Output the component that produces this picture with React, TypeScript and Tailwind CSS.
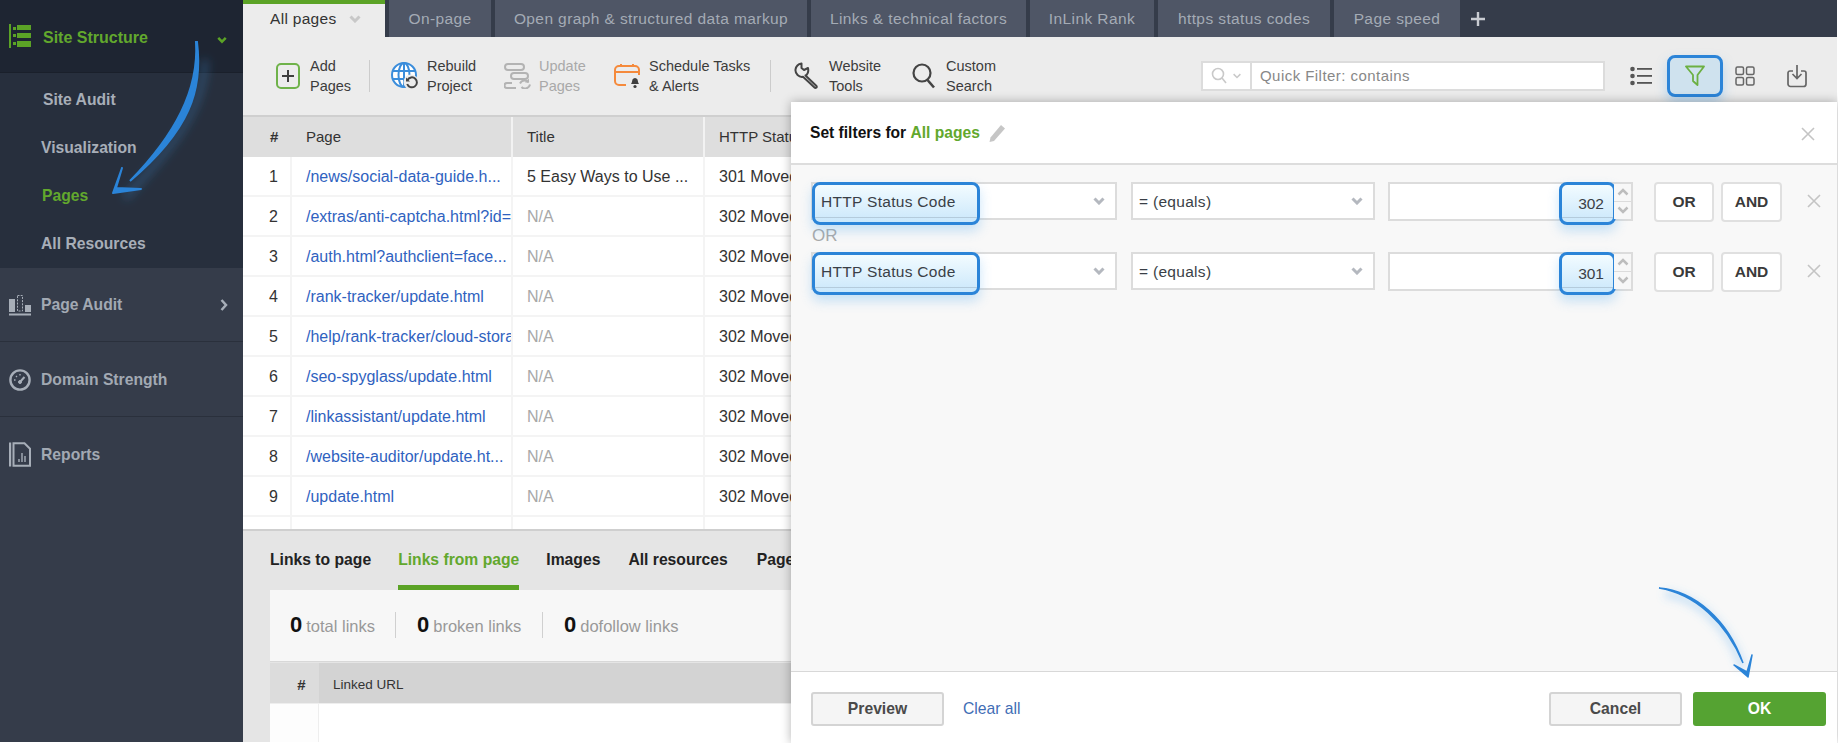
import React from "react";

const FONT = "font-['Liberation_Sans',Arial,sans-serif]";

const Chevron = ({ className = "", color = "#b4b8bf", w = 3 }: { className?: string; color?: string; w?: number }) => (
  <svg width="12" height="8" viewBox="0 0 12 8" className={className}>
    <path d="M1.5 1.5 6 6l4.5-4.5" fill="none" stroke={color} strokeWidth={w} />
  </svg>
);

const XIcon = ({ size = 14 }: { size?: number }) => (
  <svg width={size} height={size} viewBox="0 0 14 14">
    <path d="M1 1l12 12M13 1 1 13" stroke="#c4c4c4" strokeWidth="1.6" fill="none" />
  </svg>
);

const SiteStructureIcon = () => (
  <svg width="22" height="24" viewBox="0 0 22 24" fill="#5ba326">
    <rect x="0" y="0" width="2" height="24" />
    <rect x="4" y="3" width="3" height="3" />
    <rect x="4" y="10" width="3" height="3" />
    <rect x="4" y="18" width="3" height="3" />
    <rect x="8" y="1" width="14" height="5" />
    <rect x="8" y="9" width="14" height="5" />
    <rect x="8" y="17" width="14" height="6" />
  </svg>
);
const PageAuditIcon = () => (
  <svg width="22" height="22" viewBox="0 0 22 22" fill="#a7aeb8">
    <rect x="0" y="5" width="6" height="13" />
    <path d="M8.5 1.5h5v15.5h-5z" fill="none" stroke="#a7aeb8" strokeDasharray="2 1.2" />
    <rect x="16" y="11" width="6" height="7" />
    <rect x="0" y="19.5" width="22" height="2" />
  </svg>
);
const GaugeIcon = () => (
  <svg width="22" height="22" viewBox="0 0 22 22" fill="none" stroke="#a7aeb8">
    <circle cx="11" cy="11" r="9.6" strokeWidth="2.4" />
    <path d="M11 13l4.5-5" strokeWidth="2" />
    <path d="M5 11h1.5M11 5v1.5M7 7l1 1" strokeWidth="1.4" />
    <circle cx="11" cy="13" r="1.5" fill="#a7aeb8" />
  </svg>
);
const ReportsIcon = () => (
  <svg width="22" height="25" viewBox="0 0 22 25" fill="none" stroke="#a7aeb8">
    <path d="M1 0.5v24" strokeWidth="2.4" />
    <path d="M4.5 1.2h11l5.5 5.5v17H4.5z" strokeWidth="2" />
    <path d="M10 20v-3M13 20v-9M16 20v-6" strokeWidth="1.4" />
  </svg>
);

const AddIcon = () => (
  <svg width="24" height="26" viewBox="0 0 24 26" fill="none">
    <rect x="1" y="1" width="22" height="24" rx="4" stroke="#6fb24a" strokeWidth="2" />
    <path d="M12 7v12M6 13h12" stroke="#3f3f3f" strokeWidth="2" />
  </svg>
);
const GlobeIcon = () => (
  <svg width="28" height="28" viewBox="0 0 28 28" fill="none">
    <circle cx="13" cy="13" r="12" fill="#ffffff" stroke="#3b8ddb" strokeWidth="2" />
    <ellipse cx="13" cy="13" rx="5.5" ry="12" stroke="#3b8ddb" strokeWidth="2" />
    <path d="M2 9h22M2 17h22M13 1v24" stroke="#3b8ddb" strokeWidth="2" />
    <circle cx="20" cy="20" r="7.5" fill="#ececec" />
    <path d="M16.5 18a5 5 0 1 1-.3 4" stroke="#444" strokeWidth="2" />
    <path d="M15 15.5v4h4z" fill="#444" />
  </svg>
);
const UpdateIcon = () => (
  <svg width="28" height="26" viewBox="0 0 28 26" fill="none" stroke="#b3b3b3" strokeWidth="2">
    <rect x="1" y="1" width="19" height="6" rx="3" />
    <rect x="7" y="10" width="17" height="6" rx="3" />
    <path d="M8 20H3a2.5 2.5 0 0 0 0 5h9" />
    <path d="M16 20.5a5 5 0 0 1 8.5-1M26 21.5a5 5 0 0 1-8.5 2.5" />
    <path d="M25 15.5v4h-4z" fill="#b3b3b3" stroke="none" />
  </svg>
);
const ScheduleIcon = () => (
  <svg width="28" height="26" viewBox="0 0 28 26" fill="none">
    <path d="M12 22H5a4 4 0 0 1-4-4V7a4 4 0 0 1 4-4h16a4 4 0 0 1 4 4v5" stroke="#f58a3c" strokeWidth="2" />
    <path d="M1 9h24M7 1v3M19 1v3" stroke="#f58a3c" strokeWidth="2" />
    <path d="M17 21c1-1 1-3 1.5-4.5a2.8 2.8 0 0 1 5 0C24 18 24 20 25 21z" fill="#3f3f3f" />
    <circle cx="21" cy="23.5" r="1.6" fill="#3f3f3f" />
  </svg>
);
const WrenchIcon = () => (
  <svg width="25" height="27" viewBox="0 0 25 27" fill="none" stroke="#444" strokeWidth="2" strokeLinejoin="round">
    <path d="M7.5 1.5 L7.5 6 L10 8 L14 6 C15 10 13 13 11.5 13.5 L22.5 24 C23.5 25.5 21.5 26.5 20.5 25.5 L9 14.8 C5 15.5 1 12 1.5 7.5 C2 4.5 4.5 2 7.5 1.5 Z" />
  </svg>
);
const SearchIcon = () => (
  <svg width="24" height="26" viewBox="0 0 24 26" fill="none" stroke="#444">
    <circle cx="10" cy="10" r="8.5" strokeWidth="2.2" />
    <path d="M15.5 17l6.5 7.5" strokeWidth="2.6" />
  </svg>
);
const ListIcon = () => (
  <svg width="22" height="20" viewBox="0 0 22 20" fill="#555">
    <circle cx="2.5" cy="3" r="2.3" />
    <circle cx="2.5" cy="10" r="2.3" />
    <circle cx="2.5" cy="17" r="2.3" />
    <rect x="7" y="2" width="15" height="1.8" />
    <rect x="7" y="9" width="15" height="1.8" />
    <rect x="7" y="16" width="15" height="1.8" />
  </svg>
);
const FunnelIcon = () => (
  <svg width="20" height="21" viewBox="0 0 20 21" fill="none" stroke="#6cb043" strokeWidth="1.8">
    <path d="M1 1.5h18L12.5 10v10l-4.5-4v-6z" strokeLinejoin="round" />
  </svg>
);
const GridIcon = () => (
  <svg width="20" height="20" viewBox="0 0 20 20" fill="none" stroke="#666" strokeWidth="1.5">
    <rect x="1" y="1" width="7.5" height="7.5" rx="1.5" />
    <rect x="11.5" y="1" width="7.5" height="7.5" rx="1.5" />
    <rect x="1" y="11.5" width="7.5" height="7.5" rx="1.5" />
    <rect x="11.5" y="11.5" width="7.5" height="7.5" rx="1.5" />
  </svg>
);
const ExportIcon = () => (
  <svg width="20" height="24" viewBox="0 0 20 24" fill="none" stroke="#666" strokeWidth="1.7">
    <path d="M6 7H3a2 2 0 0 0-2 2v11a2.5 2.5 0 0 0 2.5 2.5h13A2.5 2.5 0 0 0 19 20V9a2 2 0 0 0-2-2h-3" />
    <path d="M10 1v13M5.5 10l4.5 4.5 4.500-4.5" />
  </svg>
);
const Pencil = () => (
  <svg width="17" height="18" viewBox="0 0 17 18" fill="#c6c6c6">
    <path d="M12 1l4 3.5L5 17l-4.5 1L1.5 13.5z" />
  </svg>
);

const tabs: [string, string][] = [
  ["On-page", "w-[102px]"],
  ["Open graph & structured data markup", "w-[312px]"],
  ["Links & technical factors", "w-[215px]"],
  ["InLink Rank", "w-[124px]"],
  ["https status codes", "w-[172px]"],
  ["Page speed", "w-[126px]"],
];

const rows: [string, string, string][] = [
  ["1", "/news/social-data-guide.h...", "5 Easy Ways to Use ..."],
  ["2", "/extras/anti-captcha.html?id=", "N/A"],
  ["3", "/auth.html?authclient=face...", "N/A"],
  ["4", "/rank-tracker/update.html", "N/A"],
  ["5", "/help/rank-tracker/cloud-storage", "N/A"],
  ["6", "/seo-spyglass/update.html", "N/A"],
  ["7", "/linkassistant/update.html", "N/A"],
  ["8", "/website-auditor/update.ht...", "N/A"],
  ["9", "/update.html", "N/A"],
];

const ToolItem = ({ icon, a, b, cls, off, w }: { icon: React.ReactNode; a: string; b: string; cls: string; off?: boolean; w: string }) => (
  <div className={"flex items-center shrink-0 " + cls}>
    <div className={"flex items-center shrink-0 " + w}>{icon}</div>
    <div className={"text-[14.5px] leading-[20px] " + (off ? "text-[#a9a9a9]" : "text-[#3c3c3c]")}>
      <div>{a}</div>
      <div>{b}</div>
    </div>
  </div>
);

const Highlight = ({ className, children }: { className: string; children?: React.ReactNode }) => (
  <div
    className={
      "absolute border-[3px] border-[#2b84d8] rounded-[8px] bg-gradient-to-b from-[#f2fbff] to-[#cbe8fb] shadow-[0_6px_12px_rgba(80,170,240,0.3)] " +
      className
    }
  >
    {children}
    <div className="absolute left-0 right-0 bottom-[4px] h-[1px] bg-[#b4cbdc]" />
  </div>
);

const FilterRow = ({ value }: { value: string }) => (
  <div className="flex items-start h-[39px]">
    <div className="relative w-[306px] h-[38px] bg-white border-2 border-[#dcdcdc] shrink-0">
      <Highlight className="left-[-1px] top-[-2px] w-[168px] h-[43px] flex items-center pl-[6px] pb-[4px] text-[15.5px] text-[#3a3f47] tracking-[0.3px]">
        HTTP Status Code
      </Highlight>
      <Chevron className="absolute right-[10px] top-[13px]" />
    </div>
    <div className="relative ml-[14px] w-[244px] h-[38px] bg-white border-2 border-[#dcdcdc] shrink-0 flex items-center pl-[6px] pt-[1px] text-[15.5px] text-[#3a3f47] tracking-[0.3px]">
      = (equals)
      <Chevron className="absolute right-[10px] top-[13px]" />
    </div>
    <div className="relative ml-[13px] w-[245px] h-[39px] bg-white border-2 border-[#dcdcdc] shrink-0">
      <Highlight className="left-[169px] top-[-2px] w-[57px] h-[43px] flex items-center justify-end pr-[9px] pt-[1px] text-[15.5px] text-[#3a3f47]">
        {value}
      </Highlight>
      <div className="absolute right-0 top-0 w-[17px] h-full flex flex-col bg-[#f7f7f7]">
        <div className="h-1/2 flex items-center justify-center border-b border-[#dcdcdc]">
          <Chevron className="rotate-180" color="#bdbdbd" w={2.5} />
        </div>
        <div className="h-1/2 flex items-center justify-center">
          <Chevron color="#bdbdbd" w={2.5} />
        </div>
      </div>
    </div>
    <button className="ml-[21px] w-[60px] h-[40px] bg-white border-2 border-[#e0e0e0] rounded-[4px] text-[15.5px] font-bold text-[#3a3a3a]">
      OR
    </button>
    <button className="ml-[7px] w-[61px] h-[40px] bg-white border-2 border-[#e0e0e0] rounded-[4px] text-[15.5px] font-bold text-[#3a3a3a]">
      AND
    </button>
    <div className="ml-[25px] mt-[12px]">
      <XIcon />
    </div>
  </div>
);

const SideItem = ({ label, active, cls }: { label: string; active?: boolean; cls: string }) => (
  <div className={"h-[48px] flex items-center text-[15.7px] font-bold " + cls + (active ? " text-[#62a82d]" : " text-[#a7aeb8]")}>
    {label}
  </div>
);

const SideSection = ({ icon, label, cls, last, arrow }: { icon: React.ReactNode; label: string; cls: string; last?: boolean; arrow?: boolean }) => (
  <div className={"relative flex items-center pl-[9px] gap-[10px] text-[15.7px] font-bold text-[#a2a9b3] " + cls + (last ? "" : " border-b border-[#2a303c]")}>
    <div className="w-[22px] flex justify-center">{icon}</div>
    <span>{label}</span>
    {arrow && (
      <svg width="8" height="12" viewBox="0 0 8 12" className="absolute left-[220px] top-[31px]">
        <path d="M1.5 1l4.5 5-4.5 5" fill="none" stroke="#a7aeb8" strokeWidth="2.5" />
      </svg>
    )}
  </div>
);

export default function App() {
  return (
    <div className={"relative w-[1838px] h-[743px] overflow-hidden bg-white flex " + FONT}>
      {/* Sidebar */}
      <aside className="w-[243px] h-[742px] bg-[#353c4a] shrink-0 flex flex-col">
        <div className="relative h-[73px] bg-[#1e2532] flex items-center pl-[9px] gap-[12px] text-[16px] font-bold text-[#62a82d] border-b border-[#1a202b]">
          <SiteStructureIcon />
          <span className="pt-[4px]">Site Structure</span>
          <Chevron className="absolute left-[217px] top-[36px] w-[10px]" color="#5ba326" />
        </div>
        <div className="h-[195px] bg-[#272f3d] pt-[3px]">
          <SideItem label="Site Audit" cls="pl-[43px]" />
          <SideItem label="Visualization" cls="pl-[41px]" />
          <SideItem label="Pages" active cls="pl-[42px]" />
          <SideItem label="All Resources" cls="pl-[41px]" />
        </div>
        <SideSection icon={<PageAuditIcon />} label="Page Audit" cls="h-[74px] pt-[1px]" arrow />
        <SideSection icon={<GaugeIcon />} label="Domain Strength" cls="h-[75px] pt-[1px]" />
        <SideSection icon={<ReportsIcon />} label="Reports" cls="h-[74px] pt-[1px]" last />
      </aside>

      {/* Main */}
      <main className="w-[1594px] h-[742px] flex flex-col shrink-0">
        {/* Tab bar */}
        <div className="h-[37px] bg-[#353c4a] flex shrink-0 gap-[4px]">
          <div className="w-[142px] bg-[#ececec] border-t-4 border-[#5ba326] flex items-center pl-[27px] pb-[3px] text-[15.5px] text-[#333] tracking-[0.3px] whitespace-nowrap">
            All pages
            <Chevron className="ml-[13px]" color="#c8c8c8" />
          </div>
          {tabs.map(([t, w]) => (
            <div key={t} className={"bg-[#4f5666] flex items-center justify-center pt-[1px] text-[15.5px] text-[#a4abb5] tracking-[0.4px] whitespace-nowrap " + w}>
              {t}
            </div>
          ))}
          <svg width="14" height="14" viewBox="0 0 14 14" className="ml-[7px] mt-[12px]">
            <path d="M7 0v14M0 7h14" stroke="#c9ccd2" strokeWidth="2.4" />
          </svg>
        </div>

        {/* Toolbar */}
        <div className="h-[80px] bg-[#ececec] border-b-2 border-[#cfcfcf] flex items-center shrink-0 pb-[1px] pl-[33px]">
          <ToolItem cls="w-[93px]" w="w-[34px]" icon={<AddIcon />} a="Add" b="Pages" />
          <div className="w-[1px] h-[32px] bg-[#cccccc] mr-[21px]" />
          <ToolItem cls="w-[113px]" w="w-[36px]" icon={<GlobeIcon />} a="Rebuild" b="Project" />
          <ToolItem cls="w-[110px]" w="w-[35px]" icon={<UpdateIcon />} a="Update" b="Pages" off />
          <ToolItem cls="w-[156px]" w="w-[35px]" icon={<ScheduleIcon />} a="Schedule Tasks" b="& Alerts" />
          <div className="w-[1px] h-[32px] bg-[#cccccc] mr-[23px]" />
          <ToolItem cls="w-[118px]" w="w-[35px]" icon={<WrenchIcon />} a="Website" b="Tools" />
          <ToolItem cls="w-[289px]" w="w-[34px]" icon={<SearchIcon />} a="Custom" b="Search" />
          <div className="w-[404px] h-[30px] bg-white border-2 border-[#dcdcdc] flex items-center shrink-0">
            <div className="w-[49px] h-full border-r-2 border-[#dcdcdc] flex items-center pl-[8px] gap-[4px]">
              <svg width="16" height="17" viewBox="0 0 16 17" fill="none" stroke="#c9c9c9" strokeWidth="1.6">
                <circle cx="7" cy="7" r="5.5" />
                <path d="M11 11l4 5" />
              </svg>
              <Chevron className="scale-75" color="#c9c9c9" w={2} />
            </div>
            <span className="pl-[8px] pt-[1px] text-[15px] text-[#888] tracking-[0.45px]">Quick Filter: contains</span>
          </div>
          <div className="ml-[25px] shrink-0 flex">
            <ListIcon />
          </div>
          <div className="ml-[15px] w-[56px] h-[42px] border-[3px] border-[#2b84d8] rounded-[8px] bg-[#cfe2ee] shadow-[0_6px_12px_rgba(80,170,240,0.35)] flex items-center justify-center shrink-0">
            <FunnelIcon />
          </div>
          <div className="ml-[12px] shrink-0 flex">
            <GridIcon />
          </div>
          <div className="ml-[32px] shrink-0 flex">
            <ExportIcon />
          </div>
        </div>

        {/* Table */}
        <div className="h-[414px] bg-white border-b-2 border-[#cfcfcf] shrink-0 overflow-hidden">
          <div className="h-[40px] bg-[#dedede] flex text-[15px] text-[#333] items-center">
            <div className="w-[49px] pl-[27px] pt-[1px] font-bold">#</div>
            <div className="w-[221px] pl-[14px] pt-[1px] h-full flex items-center border-r-2 border-[#f2f2f2]">Page</div>
            <div className="w-[192px] pl-[14px] pt-[1px] h-full flex items-center border-r-2 border-[#f2f2f2]">Title</div>
            <div className="pl-[14px] w-[86px] pt-[1px] whitespace-nowrap overflow-hidden shrink-0">HTTP Status Code</div>
          </div>
          {rows.map(([n, p, t], i) => (
            <div key={n} className="h-[40px] flex items-center border-b-2 border-[#f4f4f4] text-[16px]">
              <div className="w-[49px] h-full pl-[26px] pt-[1px] flex items-center border-r-2 border-[#f4f4f4] text-[16px] text-[#333] shrink-0">{n}</div>
              <div className="w-[221px] h-full pl-[14px] pt-[1px] flex items-center border-r-2 border-[#f4f4f4] text-[#2f62c0] whitespace-nowrap overflow-hidden shrink-0">{p}</div>
              <div className={"w-[192px] h-full pl-[14px] pt-[1px] flex items-center border-r-2 border-[#f4f4f4] shrink-0 " + (t === "N/A" ? "text-[#a8a8a8]" : "text-[#333]")}>{t}</div>
              <div className="pl-[14px] pt-[1px] w-[86px] text-[#333] whitespace-nowrap overflow-hidden shrink-0">{i === 0 ? "301 Moved Permanently" : "302 Moved Temporarily"}</div>
            </div>
          ))}
          <div className="h-[14px] flex">
            <div className="w-[49px] border-r-2 border-[#f4f4f4]" />
            <div className="w-[221px] border-r-2 border-[#f4f4f4]" />
            <div className="w-[192px] border-r-2 border-[#f4f4f4]" />
          </div>
        </div>

        {/* Bottom pane */}
        <div className="flex-1 bg-[#e5e5e5] pl-[27px] flex flex-col min-h-0">
          <div className="h-[59px] flex text-[15.7px] font-bold text-[#222] shrink-0">
            <div className="pt-[17px]">Links to page</div>
            <div className="ml-[27px] pt-[17px] text-[#62a82d] border-b-[5px] border-[#5ba326]">Links from page</div>
            <div className="ml-[27px] pt-[17px]">Images</div>
            <div className="ml-[28px] pt-[17px]">All resources</div>
            <div className="ml-[29px] pt-[17px] w-[34px] overflow-hidden whitespace-nowrap">Page Source</div>
          </div>
          <div className="h-[72px] bg-[#f7f7f7] border-b border-[#d8d8d8] flex items-center shrink-0 pb-[2px] text-[16.5px] text-[#999]">
            <div className="flex items-baseline ml-[20px] w-[105px]">
              <span className="text-[22px] font-bold text-[#111] mr-[4px]">0</span>total links
            </div>
            <div className="w-[1px] h-[26px] bg-[#d0d0d0]" />
            <div className="flex items-baseline ml-[21px] w-[125px]">
              <span className="text-[22px] font-bold text-[#111] mr-[4px]">0</span>broken links
            </div>
            <div className="w-[1px] h-[26px] bg-[#d0d0d0]" />
            <div className="flex items-baseline ml-[21px]">
              <span className="text-[22px] font-bold text-[#111] mr-[4px]">0</span>dofollow links
            </div>
          </div>
          <div className="h-[40px] flex shrink-0 mt-[1px] text-[13.5px] text-[#333]">
            <div className="w-[49px] bg-[#dcdcdc] flex items-center justify-center pl-[14px] pt-[4px] text-[15px] font-bold">#</div>
            <div className="flex-1 bg-[#d3d3d3] flex items-center pl-[14px] pt-[4px]">Linked URL</div>
          </div>
          <div className="flex-1 bg-white border-t border-[#eeeeee] flex">
            <div className="w-[49px] bg-[#fdfdfd] border-r border-[#eeeeee]" />
          </div>
        </div>
      </main>

      {/* Modal overlay */}
      <div className="absolute left-[791px] top-[102px] w-[1046px] h-[641px] bg-white shadow-[0_0_10px_rgba(0,0,0,0.3)] flex flex-col">
        <div className="h-[63px] border-b-2 border-[#dddddd] flex items-center pl-[19px] pt-[1px] text-[15.6px] font-bold text-[#111] relative shrink-0">
          Set filters for&nbsp;<span className="text-[#62a82d]">All pages</span>
          <span className="ml-[9px] flex"><Pencil /></span>
          <div className="absolute right-[22px] top-[25px]">
            <XIcon />
          </div>
        </div>
        <div className="flex-1 bg-[#f8f8f8] border-b border-[#d8d8d8] pl-[20px] pt-[17px]">
          <FilterRow value="302" />
          <div className="h-[31px] flex items-center pl-[1px] pb-[1px] text-[17px] text-[#a9a9a9]">OR</div>
          <FilterRow value="301" />
        </div>
        <div className="h-[71px] flex items-start justify-between pt-[20px] pl-[20px] pr-[11px] shrink-0 text-[15.7px]">
          <div className="flex">
            <button className="w-[133px] h-[34px] bg-[#f5f5f5] border-2 border-[#d4d4d4] rounded-[3px] font-bold text-[#4a4a4a]">Preview</button>
            <span className="ml-[19px] leading-[34px] text-[#3f6db5] whitespace-nowrap">Clear all</span>
          </div>
          <div className="flex gap-[11px]">
            <button className="w-[133px] h-[34px] bg-[#f5f5f5] border-2 border-[#d4d4d4] rounded-[3px] font-bold text-[#4a4a4a]">Cancel</button>
            <button className="w-[133px] h-[34px] bg-[#55a332] rounded-[3px] font-bold text-white">OK</button>
          </div>
        </div>
      </div>

      {/* Sidebar arrow annotation */}
      <svg width="243" height="260" viewBox="0 0 243 260" className="absolute left-0 top-0 pointer-events-none">
        <defs>
          <filter id="glow" x="-40%" y="-40%" width="180%" height="180%">
            <feGaussianBlur stdDeviation="5" />
          </filter>
        </defs>
        <path d="M205 60 C 204 110, 170 150, 125 198" stroke="#3d8fd8" strokeOpacity="0.35" strokeWidth="6" fill="none" filter="url(#glow)" />
        <path d="M197 42 C 203 90, 190 130, 130 181 C 175 135, 199 90, 196 42 Z" fill="#2b84d8" stroke="#2b84d8" strokeWidth="2" />
        <path d="M122 168 L113 193 L141 189 L116 188 Z" fill="#2b84d8" stroke="#2b84d8" strokeWidth="2" strokeLinejoin="round" />
      </svg>

      {/* OK arrow annotation */}
      <svg width="120" height="110" viewBox="0 0 120 110" className="absolute left-[1650px] top-[580px] pointer-events-none">
        <defs>
          <filter id="glow2" x="-40%" y="-40%" width="180%" height="180%">
            <feGaussianBlur stdDeviation="4" />
          </filter>
        </defs>
        <path d="M15 14 C 50 18, 80 50, 93 88" stroke="#55aaf0" strokeOpacity="0.3" strokeWidth="7" fill="none" filter="url(#glow2)" />
        <path d="M9 8 C 45 11, 78 40, 93 83 C 76 42, 45 14, 9 8 Z" fill="#2b84d8" stroke="#2b84d8" strokeWidth="1.5" />
        <path d="M84 85 L98 97 L102 75 L97 92 Z" fill="#2b84d8" stroke="#2b84d8" strokeWidth="1.5" strokeLinejoin="round" />
      </svg>
    </div>
  );
}
